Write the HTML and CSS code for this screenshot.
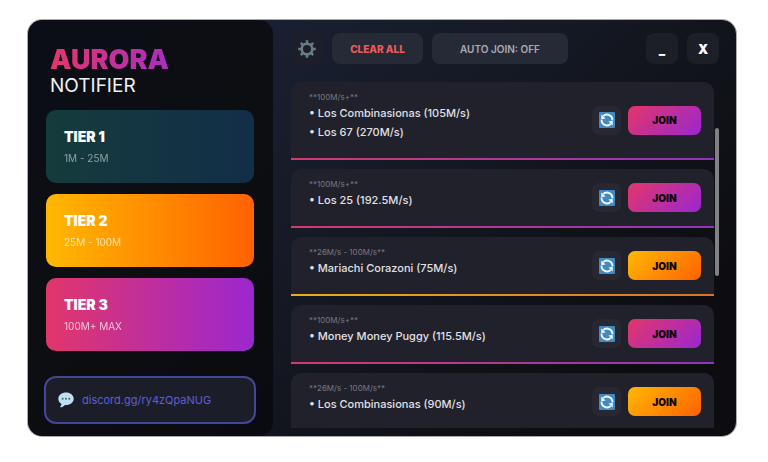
FILE: index.html
```
<!DOCTYPE html>
<html lang="en">
<head>
    <meta charset="UTF-8">
    <meta name="viewport" content="width=device-width, initial-scale=1.0">
    <title>Aurora Notifier</title>
    <link rel="stylesheet" href="styles.css">
</head>
<body>
    <!-- shared icon -->
    <svg class="sprite" aria-hidden="true">
        <symbol id="refresh" viewBox="0 0 16 16">
            <rect width="16" height="16" rx="1" fill="#3f8ac4"/>
            <path d="M13.4 8.4A5.4 5.4 0 0 0 4.2 4.2M2.6 7.6A5.4 5.4 0 0 0 11.8 11.8" fill="none" stroke="#f2f8fc" stroke-width="1.9"/>
            <path d="M2.2 2.6L2.3 7.2L6.6 6.4ZM13.8 13.4L13.7 8.8L9.4 9.6Z" fill="#f2f8fc"/>
        </symbol>
    </svg>

    <div class="app">
        <aside class="sidebar">
            <h1 class="brand"><span class="brand-name">AURORA</span><span class="brand-sub">NOTIFIER</span></h1>

            <nav class="tiers">
                <button class="tier tier-1"><span class="tier-name">TIER 1</span><span class="tier-range">1M - 25M</span></button>
                <button class="tier tier-2"><span class="tier-name">TIER 2</span><span class="tier-range">25M - 100M</span></button>
                <button class="tier tier-3"><span class="tier-name">TIER 3</span><span class="tier-range">100M+ MAX</span></button>
            </nav>

            <a href="https://discord.gg/ry4zQpaNUG" class="discord">
                <svg width="16" height="16" viewBox="0 0 16 16" aria-hidden="true">
                    <path d="M8 .5C3.7.5.3 3.2.3 6.7c0 2.2 1.2 4 3.1 5.1 0 1.4-.6 2.6-1.6 3.4 2.1 0 3.9-.8 5.1-2.3.4 0 .7.1 1.1.1 4.3 0 7.7-2.8 7.7-6.3S12.3.5 8 .5z" fill="#bfe0f2"/>
                    <circle cx="4.7" cy="6.8" r="1" fill="#4c6473"/>
                    <circle cx="8" cy="6.8" r="1" fill="#4c6473"/>
                    <circle cx="11.3" cy="6.8" r="1" fill="#4c6473"/>
                </svg>
                <span>discord.gg/ry4zQpaNUG</span>
            </a>
        </aside>

        <main class="main">
            <header class="toolbar">
                <button class="btn btn-gear" aria-label="Settings">
                    <svg width="18" height="18" viewBox="0 0 18 18" aria-hidden="true">
                        <circle cx="9" cy="9" r="5.3" fill="none" stroke="#687c88" stroke-width="2.6"/>
                        <path d="M9 .2v3M9 14.8v3M.2 9h3M14.8 9h3M2.8 2.8l2 2M13.2 13.2l2 2M2.8 15.2l2-2M13.2 4.8l2-2" stroke="#687c88" stroke-width="2.6"/>
                    </svg>
                </button>
                <button class="btn btn-clear">CLEAR ALL</button>
                <button class="btn btn-auto">AUTO JOIN: OFF</button>
                <div class="window-buttons">
                    <button class="btn btn-window" aria-label="Minimize">_</button>
                    <button class="btn btn-window" aria-label="Close">X</button>
                </div>
            </header>

            <div class="feed">
                <ul class="list">
                    <li class="row pink">
                        <div class="row-text">
                            <p class="row-range">**100M/s+**</p>
                            <p>• Los Combinasionas (105M/s)</p>
                            <p>• Los 67 (270M/s)</p>
                        </div>
                        <button class="refresh" aria-label="Refresh"><svg width="16" height="16"><use href="#refresh"/></svg></button>
                        <button class="join">JOIN</button>
                    </li>
                    <li class="row pink">
                        <div class="row-text">
                            <p class="row-range">**100M/s+**</p>
                            <p>• Los 25 (192.5M/s)</p>
                        </div>
                        <button class="refresh" aria-label="Refresh"><svg width="16" height="16"><use href="#refresh"/></svg></button>
                        <button class="join">JOIN</button>
                    </li>
                    <li class="row orange">
                        <div class="row-text">
                            <p class="row-range">**26M/s - 100M/s**</p>
                            <p>• Mariachi Corazoni (75M/s)</p>
                        </div>
                        <button class="refresh" aria-label="Refresh"><svg width="16" height="16"><use href="#refresh"/></svg></button>
                        <button class="join">JOIN</button>
                    </li>
                    <li class="row pink">
                        <div class="row-text">
                            <p class="row-range">**100M/s+**</p>
                            <p>• Money Money Puggy (115.5M/s)</p>
                        </div>
                        <button class="refresh" aria-label="Refresh"><svg width="16" height="16"><use href="#refresh"/></svg></button>
                        <button class="join">JOIN</button>
                    </li>
                    <li class="row orange">
                        <div class="row-text">
                            <p class="row-range">**26M/s - 100M/s**</p>
                            <p>• Los Combinasionas (90M/s)</p>
                        </div>
                        <button class="refresh" aria-label="Refresh"><svg width="16" height="16"><use href="#refresh"/></svg></button>
                        <button class="join">JOIN</button>
                    </li>
                </ul>
                <div class="scrollbar"><div class="thumb"></div></div>
            </div>
        </main>
    </div>
</body>
</html>
```
FILE: styles.css
```
* {
    box-sizing: border-box;
}
body {
    font-family: Inter, "Open Sans", sans-serif;
    margin: 0;
    padding: 20px 32px 26px 28px;
    height: 100vh;
    background-color: #fff;
    color: #e0e0e5;
}
p, h1, ul {
    margin: 0;
    padding: 0;
}
button {
    font-family: inherit;
    border: 0;
    padding: 0;
    cursor: pointer;
}
svg {
    display: block;
}
.sprite {
    position: absolute;
    width: 0;
    height: 0;
}
.app {
    --pink: #e2366a, #9b27cf;
    --orange: #ffb800, #ff6200;
    display: flex;
    height: 100%;
    border-radius: 14px;
    overflow: hidden;
    background: linear-gradient(135deg, #1a2032 20%, #141822 50%, #0d0d11 85%);
    box-shadow: 0 0 0 1px #a9a9ac;
}

/* Sidebar */
.sidebar {
    display: flex;
    flex-direction: column;
    flex: 0 0 245px;
    padding: 26px 17px 12px 16px;
    border-radius: 14px;
    background: linear-gradient(135deg, #0b0e17, #0d0e12 50%, #090b10);
}
.brand {
    display: flex;
    flex-direction: column;
    align-items: flex-start;
    padding-left: 6px;
    font-weight: 400;
}
.brand-name {
    font-size: 27px;
    font-weight: 900;
    line-height: 28px;
    background: linear-gradient(90deg, #e2366a, #a92fc0);
    -webkit-background-clip: text;
    background-clip: text;
    color: transparent;
}
.brand-sub {
    font-size: 19px;
    line-height: 24px;
    color: #f0f1f4;
}
.tiers {
    display: flex;
    flex-direction: column;
    gap: 11px;
    padding: 12px 2px 0;
}
.tier {
    display: flex;
    flex-direction: column;
    justify-content: center;
    gap: 5px;
    height: 73px;
    padding: 0 18px;
    border-radius: 10px;
    color: #fff;
    text-align: left;
}
.tier-1 {
    background: linear-gradient(90deg, #153b3c, #122e48);
}
.tier-2 {
    background: linear-gradient(90deg, var(--orange));
}
.tier-3 {
    background: linear-gradient(90deg, var(--pink));
}
.tier-name {
    font-size: 14px;
    font-weight: 900;
    line-height: 18px;
}
.tier-range {
    font-size: 10px;
    line-height: 14px;
    opacity: 0.7;
}
.tier-1 .tier-range {
    opacity: 0.5;
}
.discord {
    display: flex;
    align-items: center;
    gap: 8px;
    height: 48px;
    margin-top: auto;
    padding: 0 12px;
    border: 2px solid #454796;
    border-radius: 12px;
    background-color: #1b1d28;
    color: #5d5fd6;
    font-size: 11px;
    text-decoration: none;
}

/* Main area */
.main {
    display: flex;
    flex-direction: column;
    flex: 1;
    min-width: 0;
    padding: 13px 17px 8px 18px;
}
.toolbar {
    display: flex;
    gap: 9px;
    margin-bottom: 18px;
}
.btn {
    height: 31px;
    border-radius: 8px;
    background-color: #262a37;
    font-size: 10px;
}
.btn-gear {
    display: grid;
    place-items: center;
    width: 32px;
    background-color: #1c1e29;
}
.btn-clear {
    width: 91px;
    color: #ec5b5b;
    font-weight: 800;
}
.btn-auto {
    width: 136px;
    color: #a9abb5;
    font-weight: 600;
}
.window-buttons {
    display: flex;
    gap: 9px;
    margin-left: auto;
}
.btn-window {
    width: 32px;
    background-color: #1d1f27;
    color: #fff;
    font-size: 13px;
    font-weight: 900;
}
.feed {
    display: flex;
    flex: 1;
    gap: 1px;
    min-height: 0;
}
.list {
    display: flex;
    flex-direction: column;
    flex: 1;
    gap: 9px;
    list-style: none;
    overflow-y: auto;
    scrollbar-width: none;
}
.row {
    display: flex;
    align-items: center;
    flex-shrink: 0;
    gap: 7px;
    padding-right: 13px;
    border-bottom: 2px solid;
    border-radius: 10px 10px 0 0;
    background-color: #20212a;
}
.pink {
    border-image: linear-gradient(90deg, #d43a6c, #8f35bd) 1;
    --join: var(--pink);
}
.orange {
    border-image: linear-gradient(90deg, #e8ae1c, #d9722a) 1;
    --join: var(--orange);
}
.row-text {
    flex: 1;
    padding: 8px 0 16px 18px;
    font-size: 11px;
    font-weight: 500;
    line-height: 19px;
}
.row-text .row-range {
    color: #777982;
    font-size: 8px;
    font-weight: 400;
    line-height: 14px;
}
.refresh {
    display: grid;
    place-items: center;
    width: 29px;
    height: 29px;
    border-radius: 7px;
    background-color: #272832;
}
.join {
    width: 73px;
    height: 29px;
    border-radius: 7px;
    background: linear-gradient(135deg, var(--join));
    color: #0c080c;
    font-size: 10px;
    font-weight: 900;
}
.scrollbar {
    width: 4px;
    padding-top: 46px;
}
.thumb {
    height: 148px;
    border-radius: 2px;
    background-color: #808085;
}
```
